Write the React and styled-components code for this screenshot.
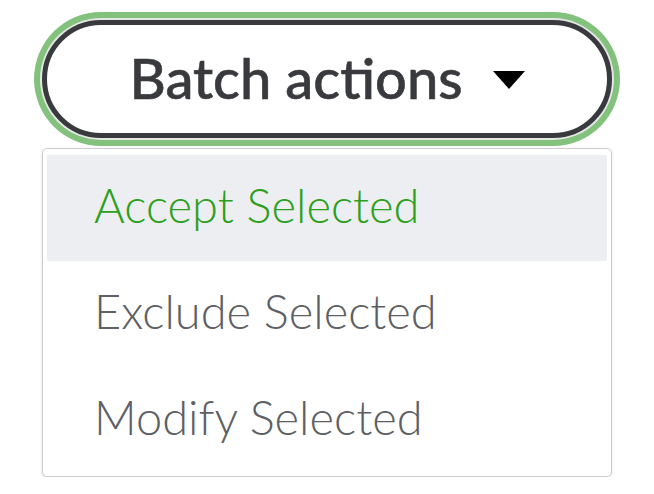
import React from "react";
import styled, { createGlobalStyle } from "styled-components";

const Global = createGlobalStyle`
  body {
    margin: 0;
    background: #fff;
    font-family: Lato, "Open Sans", "Liberation Sans", sans-serif;
  }
`;

const Page = styled.div`
  padding: 20px 0 0 42px;
  width: 570px;
`;

const Trigger = styled.button`
  box-sizing: border-box;
  width: 570px;
  height: 118px;
  border: 5px solid #393a3d;
  border-radius: 60px;
  background: #fff;
  box-shadow: 0 0 0 2px #e4e6e4, 0 0 0 8px #82c27c;
  display: flex;
  align-items: center;
  justify-content: center;
  gap: 30px;
  font-family: inherit;
  font-size: 56px;
  font-weight: 500;
  color: #393a3d;
  -webkit-text-stroke: 0.6px #393a3d;
  padding: 0 0 4px;
  cursor: pointer;
`;

const Caret = styled.span`
  width: 0;
  height: 0;
  border-left: 16px solid transparent;
  border-right: 16px solid transparent;
  border-top: 18px solid #000;
  margin-top: 6px;
`;

const Menu = styled.ul`
  box-sizing: border-box;
  list-style: none;
  margin: 10px 0 0;
  padding: 6px 4px 3px;
  width: 570px;
  border: 1px solid #cbcdd0;
  border-radius: 5px;
  background: #fff;
  box-shadow: 0 1px 3px rgba(0, 0, 0, 0.12);
`;

const Item = styled.li`
  height: 106px;
  display: flex;
  align-items: center;
  padding: 0 0 7px 47px;
  box-sizing: border-box;
  font-size: 47px;
  font-weight: 300;
  color: ${(p) => (p.active ? "#2ca01c" : "#5e5f64")};
  background: ${(p) => (p.active ? "#eceef1" : "transparent")};
`;

const items = ["Accept Selected", "Exclude Selected", "Modify Selected"];

export default function App() {
  return (
    <Page>
      <Global />
      <Trigger>
        Batch actions
        <Caret />
      </Trigger>
      <Menu>
        {items.map((label, i) => (
          <Item key={label} active={i === 0}>
            {label}
          </Item>
        ))}
      </Menu>
    </Page>
  );
}
